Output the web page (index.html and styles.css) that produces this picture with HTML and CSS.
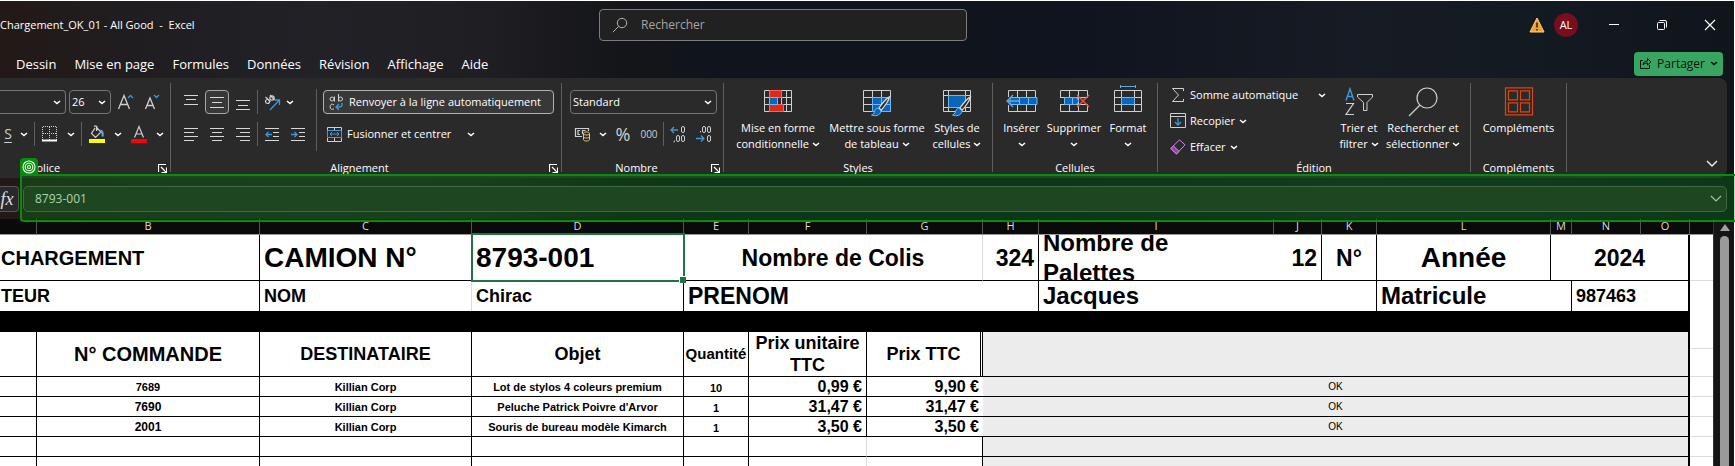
FILE: index.html
```html
<!DOCTYPE html>
<html lang="fr">
<head>
<meta charset="utf-8">
<title>Chargement_OK_01 - All Good - Excel</title>
<link rel="stylesheet" href="styles.css">
</head>
<body>
<svg class="symbols" aria-hidden="true">
  <symbol id="chev" viewBox="0 0 8 5"><path d="M1 1l3 2.6L7 1" fill="none" stroke="currentColor" stroke-width="1.5"/></symbol>
  <symbol id="launch" viewBox="0 0 9 9"><path d="M.5 8V.5H8M3 3l5 5M8.500 3.500v5h-5" fill="none" stroke="currentColor" stroke-width="1.2"/></symbol>
  <symbol id="brush" viewBox="0 0 20 21"><path d="M18.500.8c-3 1.500-8 7.500-10.500 11.200l2 2.200C13.500 11 18 4 18.500.8z" fill="#2a2a2a" stroke="#d8d8d8" stroke-width="1.300"/><path d="M7 12c-3 0-3 3-4 5-.6 1-1.500 1.600-2.500 2 3 1.500 9 1 9.500-4z" fill="#0a66b8" stroke="#6db8f2"/></symbol>
</svg>
<div class="app">
  <header class="titlebar">
    <h1 class="doc-title">Chargement_OK_01 - All Good &nbsp;-&nbsp; Excel</h1>
    <label class="search">
      <svg width="16" height="16" viewBox="0 0 16 16"><circle cx="10" cy="6" r="4.700" fill="none" stroke="#b5b5b5"/><path d="M6.600 9.400L.8 15.200" stroke="#b5b5b5"/></svg>
      <input type="search" placeholder="Rechercher" aria-label="Rechercher">
    </label>
    <div class="window-tools">
      <svg class="warn" width="16" height="16" viewBox="0 0 16 16"><path d="M8 1l7 14H1z" fill="#f0a030" stroke="#f8d48c"/><path d="M8 5.500v5M8 12v1.600" stroke="#3a2a10" stroke-width="1.600"/></svg>
      <button class="avatar">AL</button>
      <button class="win" aria-label="Réduire"><svg width="12" height="12"><path d="M1 5.500h10" stroke="#fff"/></svg></button>
      <button class="win" aria-label="Restaurer"><svg width="12" height="12" fill="none" stroke="#fff"><rect x="1.500" y="3.500" width="7" height="7" rx="1"/><path d="M3.500 1.500H9a1.500 1.500 0 011.500 1.500v5.500"/></svg></button>
      <button class="win" aria-label="Fermer"><svg width="12" height="12"><path d="M1 1l10 10M11 1L1 11" stroke="#fff" stroke-width="1.200"/></svg></button>
    </div>
  </header>
  <div class="tabbar">
    <nav class="tabs">
      <button>Dessin</button><button>Mise en page</button><button>Formules</button><button>Données</button><button>Révision</button><button>Affichage</button><button>Aide</button>
    </nav>
    <button class="share">
      <svg width="13" height="13" viewBox="0 0 13 13" fill="none" stroke="#111"><path d="M4 3.500H1.500v8h9V8"/><path d="M4 8c.3-3 2-4 4.500-4V1.500L12 5 8.500 8V6C6.500 6 5 6.500 4 8z"/></svg>
      <span>Partager</span><svg class="chev"><use href="#chev"/></svg>
    </button>
  </div>

  <div class="ribbon">
    <section class="group g-font">
      <div class="tools">
        <div class="row">
          <div class="combo font-name"><select aria-label="Police"><option></option></select><svg class="chev"><use href="#chev"/></svg></div>
          <div class="combo font-size"><select aria-label="Taille"><option>26</option></select><svg class="chev"><use href="#chev"/></svg></div>
          <button class="tool" aria-label="Agrandir"><svg width="18" height="18" fill="none"><path d="M1.500 16L7 2.500 12.500 16M3.500 11.500h7" stroke="#d0d0d0" stroke-width="1.300"/><path d="M11 5l2.500-2.500L16 5" stroke="#3f97dc" stroke-width="1.300"/></svg></button>
          <button class="tool" aria-label="Réduire la police"><svg width="18" height="18" fill="none"><path d="M2.500 16L7 5l4.500 11M4 12.500h6" stroke="#d0d0d0" stroke-width="1.300"/><path d="M11 2l2.500 2.500L16 2" stroke="#3f97dc" stroke-width="1.300"/></svg></button>
        </div>
        <div class="row">
          <button class="tool underline">S</button><button class="drop" aria-label="Options"><svg class="chev"><use href="#chev"/></svg></button>
          <i class="sep"></i>
          <button class="tool" aria-label="Bordures"><svg width="16" height="16"><path d="M.5 1v13M7.500 1v13M14.500 1v13M1 .5h14M1 7.500h14" stroke="#d0d0d0" stroke-dasharray="1 1"/><path d="M0 14.500h15" stroke="#fff" stroke-width="2"/></svg></button><button class="drop" aria-label="Options"><svg class="chev"><use href="#chev"/></svg></button>
          <i class="sep"></i>
          <button class="tool" aria-label="Remplissage"><svg width="16" height="18" fill="none"><path d="M6 3L2.500 8.500l4 4L12 7 7.500 2.500V6M5 1.500c2-1.500 3.500 0 3 2" stroke="#d0d0d0" stroke-width="1.200"/><path d="M11.500 5.500c2 .5 2.500 3 2 6" stroke="#5aaae6" stroke-width="2"/><path d="M0 16h16" stroke="#ff0" stroke-width="4"/></svg></button><button class="drop wide-drop" aria-label="Options"><svg class="chev"><use href="#chev"/></svg></button>
          <button class="tool" aria-label="Couleur de police"><svg width="16" height="18" fill="none"><path d="M3.500 12.500L8 1.500l4.500 11M5 9h6" stroke="#d0d0d0" stroke-width="1.200"/><path d="M0 16h16" stroke="red" stroke-width="4"/></svg></button><button class="drop" aria-label="Options"><svg class="chev"><use href="#chev"/></svg></button>
        </div>
      </div>
      <footer><h2>Police</h2><button class="launch" aria-label="Plus"><svg width="9" height="9"><use href="#launch"/></svg></button></footer>
    </section>
    <i class="divider"></i>

    <section class="group g-align">
      <div class="body">
        <div class="tools">
          <div class="row">
            <button class="tool" aria-label="Haut"><svg class="lines"><path d="M0 .5h14M2 4.500h10M0 9.500h14"/></svg></button>
            <button class="tool on" aria-label="Milieu"><svg class="lines"><path d="M0 2.500h14M2 7.500h10M0 12.500h14"/></svg></button>
            <button class="tool" aria-label="Bas"><svg class="lines"><path d="M0 5.500h14M2 10.500h10M0 14.500h14"/></svg></button>
            <i class="sep tight"></i>
            <button class="tool" aria-label="Orientation"><svg width="17" height="17" fill="none"><g stroke="#d0d0d0" stroke-width="1.200"><circle cx="3.500" cy="7.500" r="2"/><path d="M1.500 3l5 4.500"/><circle cx="8" cy="4" r="2.200"/><path d="M6 1l4.500 5"/></g><path d="M6 16L15 6.500M10.500 6H15.500v5" stroke="#3f97dc" stroke-width="1.300"/></svg></button><button class="drop slim" aria-label="Options"><svg class="chev"><use href="#chev"/></svg></button>
          </div>
          <div class="row">
            <button class="tool" aria-label="Gauche"><svg class="lines"><path d="M0 1.500h14M0 5.500h10M0 9.500h14M0 13.500h10"/></svg></button>
            <button class="tool" aria-label="Centrer"><svg class="lines"><path d="M0 1.500h14M2 5.500h10M0 9.500h14M2 13.500h10"/></svg></button>
            <button class="tool" aria-label="Droite"><svg class="lines"><path d="M0 1.500h14M4 5.500h10M0 9.500h14M4 13.500h10"/></svg></button>
            <i class="sep tight"></i>
            <button class="tool" aria-label="Diminuer le retrait"><svg class="lines"><path d="M0 1.500h14M8 5.500h6M8 9.500h6M0 13.500h14"/><path class="blue" d="M7 7.500H1M3.500 5L1 7.500 3.500 10"/></svg></button>
            <button class="tool" aria-label="Augmenter le retrait"><svg class="lines"><path d="M0 1.500h14M8 5.500h6M8 9.500h6M0 13.500h14"/><path class="blue" d="M0 7.500h6M3.500 5L6 7.500 3.500 10"/></svg></button>
          </div>
        </div>
        <i class="divider mid"></i>
        <div class="tools wide">
          <button class="wrap"><svg width="15" height="18" viewBox="0 0 15 18" fill="none" stroke="#d0d0d0"><circle cx="3" cy="6" r="2"/><path d="M5.500 3.500v5M9.500 1v7.500M5 11.800c-2-1.300-4-.3-4 2s2 3.200 4 2"/><circle cx="11.500" cy="6" r="2"/><path d="M13 10v1.500c0 2-1 2.500-3 2.500H7.500M10 11l-3 3 3 3" stroke="#3f97dc" stroke-width="1.300"/></svg>Renvoyer à la ligne automatiquement</button>
          <button class="merge"><svg width="15" height="15" viewBox="0 0 15 15" fill="none"><path d="M.5 4V.5h14V4M.5 11v3.500h14V11M7.500 0v3.500M7.500 11v4" stroke="#d0d0d0"/><path d="M.5 3.500h14v7H.5zM3 7h9M5 5L3 7l2 2M10 5l2 2-2 2" stroke="#3f97dc"/></svg><span>Fusionner et centrer</span><svg class="chev"><use href="#chev"/></svg></button>
        </div>
      </div>
      <footer><h2>Alignement</h2><button class="launch" aria-label="Plus"><svg width="9" height="9"><use href="#launch"/></svg></button></footer>
    </section>
    <i class="divider"></i>

    <section class="group g-number">
      <div class="tools">
        <div class="combo"><select aria-label="Format de nombre"><option>Standard</option></select><svg class="chev"><use href="#chev"/></svg></div>
        <div class="row">
          <button class="tool" aria-label="Format comptable"><svg width="16" height="16" fill="none"><path d="M7 10.500H.5v-8h13V5M5 4.500H3v4h2M7.500 8V4.500h3" stroke="#d0d0d0" stroke-width="1.200"/><path d="M8.500 7.500v6c0 2 6 2 6 0v-6c0-2-6-2-6 0c0 2 6 2 6 0M8.500 10.500c0 2 6 2 6 0" stroke="#f0c674" fill="#2a2a2a"/></svg></button><button class="drop" aria-label="Options"><svg class="chev"><use href="#chev"/></svg></button>
          <button class="tool percent">%</button>
          <button class="tool zeros">000</button>
          <i class="sep tight"></i>
          <button class="tool" aria-label="Ajouter une décimale"><svg width="16" height="18" fill="none" stroke="#d0d0d0"><rect x="11.500" y="1.500" width="3" height="6" rx="1.500"/><rect x="6.500" y="10.500" width="3" height="6" rx="1.500"/><rect x="11.500" y="10.500" width="3" height="6" rx="1.500"/><path d="M4.500 15.500L4 17.500"/><path d="M8 5H1M4 2L1 5l3 3" stroke="#3f97dc" stroke-width="1.300"/></svg></button>
          <button class="tool" aria-label="Réduire les décimales"><svg width="16" height="18" fill="none" stroke="#d0d0d0"><rect x="6.500" y="1.500" width="3" height="6" rx="1.500"/><rect x="11.500" y="1.500" width="3" height="6" rx="1.500"/><rect x="11.500" y="10.500" width="3" height="6" rx="1.500"/><path d="M4.500 6v1.500"/><path d="M0 13.500h8M5 10.500l3 3-3 3" stroke="#3f97dc" stroke-width="1.300"/></svg></button>
        </div>
      </div>
      <footer><h2>Nombre</h2><button class="launch" aria-label="Plus"><svg width="9" height="9"><use href="#launch"/></svg></button></footer>
    </section>
    <i class="divider"></i>

    <section class="group g-styles">
      <div class="body">
        <button class="big"><svg width="30" height="30"><path d="M1.500 3.500h27v21h-27zM6.500 3v22M18.500 3v22M23.500 3v22M1 10.500h28M1 17.500h28" stroke="#d0d0d0" fill="none"/><path d="M6.500 3.500h12v7h-12zM6.500 17.500h14v7h-14z" fill="#d92a1c" stroke="#ff6058"/><path d="M6.500 10.500h8v7h-8z" fill="#0a66b8" stroke="#6db8f2"/></svg><span>Mise en forme<br>conditionnelle <svg class="chev"><use href="#chev"/></svg></span></button>
        <button class="big"><svg width="30" height="30"><path d="M1.500 3.500h27v21h-27zM10.500 3v22M19.500 3v22M1 10.500h28M1 17.500h28" stroke="#d0d0d0" fill="none"/><path d="M10.500 10.500h18v14h-18zM19.500 10v15M10 17.500h18" fill="#0a66b8" stroke="#6db8f2"/><use href="#brush" x="9" y="9" width="20" height="21"/></svg><span>Mettre sous forme<br>de tableau <svg class="chev"><use href="#chev"/></svg></span></button>
        <button class="big"><svg width="30" height="30"><path d="M1.500 3.500h27v21h-27zM6.500 3v22M23.500 3v22M1 8.500h28M1 20.500h28" stroke="#d0d0d0" fill="none"/><path d="M6.500 8.500h17v12h-17z" fill="#0a66b8" stroke="#6db8f2"/><use href="#brush" x="10" y="9" width="20" height="21"/></svg><span>Styles de<br>cellules <svg class="chev"><use href="#chev"/></svg></span></button>
      </div>
      <footer><h2>Styles</h2></footer>
    </section>
    <i class="divider"></i>

    <section class="group g-cells">
      <div class="body">
        <button class="big"><svg width="32" height="30"><path d="M2.500 10V3.500h27V10M2.500 18v6.500h27V18M11.500 3v22M20.500 3v22" stroke="#d0d0d0" fill="none"/><path d="M4 10.500h27v7H4z" fill="#0a66b8" stroke="#6db8f2"/><path d="M13.500 10v8M22.500 10v8" stroke="#6db8f2"/><path d="M13 14H1M7 8l-6 6 6 6" stroke="#5aaae6" stroke-width="1.400" fill="none"/></svg><span>Insérer<br><svg class="chev"><use href="#chev"/></svg></span></button>
        <button class="big"><svg width="30" height="30"><path d="M1.500 10V3.500h27V10M1.500 18v6.500h27V18M10.500 3v22M19.500 3v22M1 10.500h28M1 17.500h28" stroke="#d0d0d0" fill="none"/><path d="M5.500 10.500h12L20 14l-2.500 3.500h-12zM13.500 10v8" fill="#0a66b8" stroke="#6db8f2"/><path d="M18 8l12 12M30 8L18 20" stroke="#e5534b" stroke-width="1.500"/></svg><span>Supprimer<br><svg class="chev"><use href="#chev"/></svg></span></button>
        <button class="big"><svg width="30" height="30"><path d="M1.500 3.500h27v21h-27zM8.500 3v22M21.500 3v22M1 10.500h28M1 17.500h28" stroke="#d0d0d0" fill="none"/><path d="M8.500 10.500h13v7h-13z" fill="#0a66b8" stroke="#6db8f2"/><path d="M7.500 -2v3M22.500 -2v3M7 -.5h16" stroke="#5aaae6"/></svg><span>Format<br><svg class="chev"><use href="#chev"/></svg></span></button>
      </div>
      <footer><h2>Cellules</h2></footer>
    </section>
    <i class="divider"></i>

    <section class="group g-edit">
      <div class="body">
        <div class="stack">
          <button><svg width="16" height="16"><path d="M13.500 4V1.500h-11L8.500 8l-6 6.500h11V12" stroke="#d0d0d0" fill="none"/></svg><span class="grow">Somme automatique</span><svg class="chev"><use href="#chev"/></svg></button>
          <button><svg width="16" height="16" fill="none"><path d="M.5.5h15v14H.5zM.5 3.500h15" stroke="#d0d0d0"/><path d="M8 5v7M5 9l3 3 3-3" stroke="#3f97dc" stroke-width="1.300"/></svg>Recopier<svg class="chev"><use href="#chev"/></svg></button>
          <button><svg width="16" height="16"><path d="M.8 9.500L9.500.8l5.500 5L6.500 15z" fill="#2a2a2a" stroke="#d08be0"/><path d="M.8 9.500L3.500 7 9 12.300 6.500 15z" fill="#9a3fb0" stroke="#d08be0"/></svg>Effacer<svg class="chev"><use href="#chev"/></svg></button>
        </div>
        <button class="big sort"><svg width="30" height="30" fill="none"><path d="M2 13.500L6 2l4 11.500M3.500 9.500h5" stroke="#3f97dc" stroke-width="1.400"/><path d="M2 16.500h7.500L2 27.500h8" stroke="#d0d0d0" stroke-width="1.200"/><path d="M13.500 7.500h15V10L23 15.500v8h-3.500v-8L13.500 10z" stroke="#d0d0d0"/></svg><span>Trier et<br>filtrer <svg class="chev"><use href="#chev"/></svg></span></button>
        <button class="big find"><svg width="30" height="30" fill="none" stroke="#d0d0d0" stroke-width="1.200"><circle cx="19" cy="11" r="10"/><path d="M12 18L1 29"/></svg><span>Rechercher et<br>sélectionner <svg class="chev"><use href="#chev"/></svg></span></button>
      </div>
      <footer><h2>Édition</h2></footer>
    </section>
    <i class="divider"></i>

    <section class="group g-addins">
      <div class="body">
        <button class="big"><svg width="30" height="30" fill="none" stroke="#e0440f" stroke-width="1.200"><path d="M1.500.8h27v27h-27zM4.500 3.800h9v9h-9zM16.500 3.800h9v9h-9zM4.500 15.800h9v9h-9zM16.500 15.800h9v9h-9z"/></svg><span>Compléments</span></button>
      </div>
      <footer><h2>Compléments</h2></footer>
    </section>
    <i class="divider"></i>
    <button class="collapse" aria-label="Réduire le ruban"><svg width="12" height="8"><path d="M1 1l5 5 5-5" fill="none" stroke="#e8e8e8" stroke-width="1.500"/></svg></button>
  </div>

  <div class="formula-bar">
    <button class="fx">fx</button>
    <div class="formula">
      <input aria-label="Barre de formule" value="8793-001">
      <svg width="12" height="8"><path d="M1 1l5 5 5-5" fill="none" stroke="#e0e0e0" stroke-width="1.200"/></svg>
    </div>
    <div class="highlight">
      <svg class="tag" width="18" height="18" viewBox="0 0 18 18" fill="none" stroke="#e6ffe6" stroke-width="1.100"><circle cx="9" cy="9" r="6"/><circle cx="9" cy="9" r="3.800"/><circle cx="9" cy="9" r="1.500"/></svg>
    </div>
  </div>

  <main class="sheet">
    <table>
      <colgroup><col class="a"><col class="b"><col class="c"><col class="c"><col class="e"><col class="f"><col class="g"><col class="h"><col class="i"><col class="j"><col class="k"><col class="l"><col class="m"><col class="n"><col class="o"><col></colgroup>
      <thead><tr><th></th><th>B</th><th>C</th><th>D</th><th>E</th><th>F</th><th>G</th><th>H</th><th>I</th><th>J</th><th>K</th><th>L</th><th>M</th><th>N</th><th>O</th><th></th></tr></thead>
      <tbody>
        <tr class="r-top">
          <td colspan="2" class="left s20">CHARGEMENT</td><td class="left s28">CAMION N°</td><td class="left s28 selected">8793-001</td>
          <td colspan="3" class="s23 faint">Nombre de Colis</td><td class="right s23">324</td>
          <td class="left s24 open"><div class="clip">Nombre de Palettes</div></td><td class="right s23">12</td><td class="s23">N°</td><td class="s28">Année</td><td colspan="3" class="s23 edge">2024</td><td class="out"></td>
        </tr>
        <tr class="r-name">
          <td colspan="2" class="left s18">TEUR</td><td class="left s18 faint">NOM</td><td class="left s18">Chirac</td><td colspan="4" class="left s23">PRENOM</td><td colspan="3" class="left s24">Jacques</td><td colspan="2" class="left s24">Matricule</td><td colspan="2" class="left s18 edge">987463</td><td class="out plain"></td>
        </tr>
        <tr class="r-band"><td colspan="15" class="band"></td><td class="out plain"></td></tr>
        <tr class="r-h1">
          <td rowspan="2"></td><td rowspan="2" class="s20">N° COMMANDE</td><td rowspan="2" class="s18">DESTINATAIRE</td><td rowspan="2" class="s18">Objet</td><td rowspan="2" class="s15">Quantité</td><td rowspan="2" class="s18">Prix unitaire TTC</td><td rowspan="2" class="s18 double">Prix TTC</td><td rowspan="2" colspan="8" class="grey edge"></td><td class="out"></td>
        </tr>
        <tr class="r-h2"><td class="out"></td></tr>
        <tr><td></td><td class="s11">7689</td><td class="s11">Killian Corp</td><td class="s11">Lot de stylos 4 coleurs premium</td><td class="s11 low">10</td><td class="right s16">0,99 €</td><td class="right s16 open">9,90 €</td><td colspan="8" class="grey edge">OK</td><td class="out"></td></tr>
        <tr><td></td><td class="s12">7690</td><td class="s11">Killian Corp</td><td class="s11">Peluche Patrick Poivre d'Arvor</td><td class="s11 low">1</td><td class="right s16">31,47 €</td><td class="right s16 open">31,47 €</td><td colspan="8" class="grey edge">OK</td><td class="out"></td></tr>
        <tr><td></td><td class="s12">2001</td><td class="s11">Killian Corp</td><td class="s11">Souris de bureau modèle Kimarch</td><td class="s11 low">1</td><td class="right s16">3,50 €</td><td class="right s16 open">3,50 €</td><td colspan="8" class="grey edge">OK</td><td class="out"></td></tr>
        <tr><td></td><td></td><td></td><td></td><td></td><td class="faint"></td><td></td><td colspan="8" class="grey edge"></td><td class="out"></td></tr>
        <tr><td></td><td></td><td></td><td></td><td></td><td class="faint"></td><td></td><td colspan="8" class="grey edge"></td><td class="out"></td></tr>
      </tbody>
    </table>
    <div class="scroll"><i class="up"></i><i class="thumb"></i></div>
  </main>
</div>
</body>
</html>
```
FILE: styles.css
```css
* { box-sizing: border-box; }
html, body { margin: 0; height: 100%; background: #fff; }
body { font: 12px/16px "Open Sans", "Noto Sans", sans-serif; color: #fff; overflow: hidden; }
button, input, select { font: inherit; color: inherit; background: none; border: 0; padding: 0; margin: 0; outline: 0; }
button { white-space: nowrap; }
h1, h2 { margin: 0; font: inherit; }
svg { flex: none; overflow: visible; }
i { flex: none; }
.symbols { position: absolute; width: 0; height: 0; }
.chev { width: 8px; height: 5px; }

.app {
  display: flex; flex-direction: column; height: 100%;
  border-top: 1px solid #fff; border-right: 1px solid #fff;
  background: linear-gradient(90deg, #231916 0, #201d20 7%, #212127 18%, #1f1f23 28%, #141519 36%, #0f141d 42%, #0f141e 62%, #161b24 78%, #141a22 88%, #10151c 100%);
}

.titlebar { display: grid; grid-template-columns: 599fr 368fr 767fr; align-items: center; height: 47px; }
.doc-title { font-size: 11px; white-space: nowrap; }
.search { display: flex; align-items: center; gap: 13px; height: 32px; padding: 0 12px; border: 1px solid #7d7d7d; border-radius: 4px; background: #212121; }
.search input { flex: 1; min-width: 0; appearance: none; }
.search input::placeholder { color: #a6a6a6; opacity: 1; }
.window-tools { display: flex; align-items: center; justify-content: flex-end; }
.avatar { width: 24px; height: 24px; margin: 0 12px 0 9px; border-radius: 50%; background: #780c20; font-size: 11px; }
.win { display: grid; place-items: center; width: 48px; height: 32px; }

.tabbar { display: flex; justify-content: space-between; align-items: center; height: 30px; padding: 1px 11px 0 7px; }
.tabs { display: flex; font-size: 13px; }
.tabs button { padding: 0 9px; }
.share { display: flex; align-items: center; gap: 5px; height: 24px; padding: 0 5px; border-radius: 4px; background: #38a560; color: #101010; }

.ribbon { display: flex; min-height: 100px; margin-right: 7px; padding-top: 5px; border-radius: 0 8px 8px 0; background: #2a2a2a; font-size: 11px; }
.divider { width: 1px; margin-bottom: 6px; background: #5e5e5e; }
.divider.mid { margin: 2px 6px 0 5px; height: 62px; }
.group { display: flex; flex: none; flex-direction: column; justify-content: space-between; padding-top: 4px; }
.group .body { display: flex; align-items: flex-start; }
.group footer { display: flex; align-items: center; padding-bottom: 2px; }
.group h2 { flex: 1; text-align: center; }
.launch { display: flex; width: 12px; }
.g-font { width: 170px; }
.g-font h2 { padding-right: 68px; }
.g-align { width: 390px; padding-left: 7px; }
.g-align h2 { padding-right: 8px; }
.g-number { width: 161px; padding-left: 8px; }
.g-number h2 { padding-right: 8px; }
.g-styles { width: 268px; }
.g-cells { width: 164px; }
.g-edit { width: 312px; }
.g-addins { width: 95px; }
.g-styles .body { padding-left: 7px; }
.g-cells .body { padding-left: 6px; }
.g-addins .body { justify-content: center; }

.tools { display: flex; flex-direction: column; gap: 8px; padding-top: 3px; }
.row { display: flex; align-items: center; height: 24px; }
.tool { display: grid; place-items: center; width: 26px; height: 24px; color: #d0d0d0; }
.tool.on { width: 24px; margin: 0 1px; border: 1px solid #a8a8a8; border-radius: 4px; background: #383838; }
.tool.underline { width: 16px; font-size: 14px; text-decoration: underline; text-underline-offset: 3px; }
.tool.percent { font-size: 18px; }
.tool.zeros { font-size: 10px; }
.drop { display: grid; place-items: center; width: 16px; height: 24px; }
.drop.slim { width: 10px; }
.g-number .drop { width: 14px; }
.sep { width: 1px; height: 24px; margin: 0 2px; background: #5e5e5e; }
.sep.tight { margin: 0 1px; }
.lines { width: 14px; height: 15px; fill: none; stroke: #d8d8d8; }
.lines .blue { stroke: #3f97dc; stroke-width: 1.3px; }
.combo { display: flex; align-items: center; height: 24px; padding: 0 4px 0 2px; border: 1px solid #757575; border-radius: 4px; }
.combo select { flex: 1; min-width: 0; appearance: none; }
.g-number .combo { width: 147px; }
.g-number .tools { align-items: flex-start; }
.font-name { width: 66px; margin-right: 3px; border-left: 0; border-radius: 0 4px 4px 0; }
.font-size { width: 42px; margin-right: 2px; }
.wide button { display: flex; align-items: center; height: 24px; gap: 5px; }
.wrap { width: 231px; padding: 0 5px; border: 1px solid #b0b0b0; border-radius: 4px; background: #383838; }
.merge { padding: 0 4px; }
.merge span { margin-right: 11px; }

.big { display: flex; flex-direction: column; align-items: center; gap: 3px; line-height: 16px; }
.big .chev { vertical-align: 1px; }
.g-styles .big:nth-child(1) { width: 94px; }
.g-styles .big:nth-child(2) { width: 104px; }
.g-styles .big:nth-child(3) { width: 56px; }
.g-cells .big:nth-child(1) { width: 45px; }
.g-cells .big:nth-child(2) { width: 60px; }
.g-cells .big:nth-child(3) { width: 48px; }
.stack { display: flex; flex-direction: column; gap: 10px; width: 176px; padding: 0 8px 0 12px; }
.stack button { display: flex; align-items: center; gap: 4px; height: 16px; text-align: left; }
.stack .grow { flex: 1; }
.sort { width: 50px; }
.find { width: 78px; }
.collapse { align-self: flex-end; margin: 0 9px 10px auto; line-height: 8px; }

.formula-bar { position: relative; display: flex; gap: 4px; align-items: center; height: 41px; padding: 0 7px 0 0; }
.fx { width: 19px; height: 26px; padding-right: 4px; border: 1px solid #555; border-left: 0; border-radius: 0 4px 4px 0; background: #292929; color: #e0e0e0; font: italic 18px/20px "Liberation Serif", serif; }
.formula { display: flex; flex: 1; align-items: center; height: 26px; padding: 1px 4px 0 11px; border: 1px solid #5a5a5a; border-radius: 5px; background: #292929; color: #f0f0f0; }
.formula input { flex: 1; min-width: 0; }
.highlight { position: absolute; inset: -4px -1px -3px 20px; border: solid #078d0c; border-width: 2px 0 2px 2px; border-radius: 0 0 0 4px; background: rgba(8, 140, 14, .3); pointer-events: none; }
.tag { position: absolute; left: -2px; bottom: 100%; border-radius: 4px 4px 0 0; background: #078d0c; }

.sheet { display: flex; flex: 1; min-height: 0; overflow: hidden; background: #fff; color: #000; }
table { flex: 1; align-self: flex-start; min-width: 0; width: 0; table-layout: fixed; border-collapse: separate; border-spacing: 0; font: bold 11px/16px "Liberation Sans", Arial, sans-serif; }
.a { width: 37px; } .b { width: 223px; } .c { width: 212px; } .e { width: 65px; } .f { width: 118px; } .g { width: 116px; } .h { width: 56px; } .i { width: 235px; } .j { width: 48px; } .k { width: 55px; } .l { width: 174px; } .m { width: 21px; } .n { width: 69px; } .o { width: 49px; }
th { height: 16px; padding: 0 0 2px; border-right: 1px solid #555; border-bottom: 1px solid #999; background: #0a0a0a; color: #dcdcdc; font: 11px/13px "Open Sans", "Noto Sans", sans-serif; }
th:last-child { border-right: 0; }
td { height: 20px; padding: 0; border: solid #000; border-width: 0 1px 1px 0; text-align: center; vertical-align: middle; white-space: nowrap; line-height: 18px; }
.left { padding-left: 4px; text-align: left; }
.right { padding-right: 4px; text-align: right; }
td:first-child.left { padding-left: 1px; }
.s11 { font-size: 11px; } .s12 { font-size: 12px; } .s15 { font-size: 15px; } .s16 { font-size: 16px; } .s18 { font-size: 18px; } .s20 { font-size: 20px; } .s23 { font-size: 23px; } .s24 { font-size: 24px; } .s28 { font-size: 28px; }
.low { padding-top: 3px; line-height: 16px; }
.r-top td { height: 46px; }
.r-name td { height: 30px; border-bottom: 0; line-height: 28px; }
.r-band td { height: 21px; }
.r-h1 td { height: 17px; line-height: 22px; white-space: normal; }
.r-h1 td[rowspan] { height: 45px; }
.r-h2 td { height: 28px; }
td.band { background: #000; }
td.open { border-right: 0; }
td.faint { border-right-color: #dcdcdc; }
td.edge { border-right-width: 2px; }
td.double { border-right: 3px double #000; }
td.grey { background: #ececec; font-size: 10px; font-weight: normal; }
td.out { border-right: 0; border-bottom-color: #dcdcdc; }
td.plain { border-bottom: 0; }
.clip { display: flex; align-items: center; height: 45px; overflow: hidden; line-height: 30px; white-space: normal; padding-right: 60px; }
.selected { position: relative; }
.selected::before { content: ""; position: absolute; inset: -2px -2px -2px -1px; border: 2px solid #217346; }
.selected::after { content: ""; position: absolute; right: -3px; bottom: -3px; width: 6px; height: 6px; border: solid #fff; border-width: 1px 0 0 1px; background: #217346; }
.scroll { display: flex; flex: none; flex-direction: column; align-items: center; width: 21px; padding-left: 1px; background: #151515; border-left: 1px solid #333; }
.up { margin-top: 5px; border: solid transparent; border-width: 0 5px 7px; border-bottom-color: #a0a0a0; }
.thumb { flex: 1; width: 9px; margin-top: 5px; border-radius: 5px 5px 0 0; background: #9a9a9a; }
```
